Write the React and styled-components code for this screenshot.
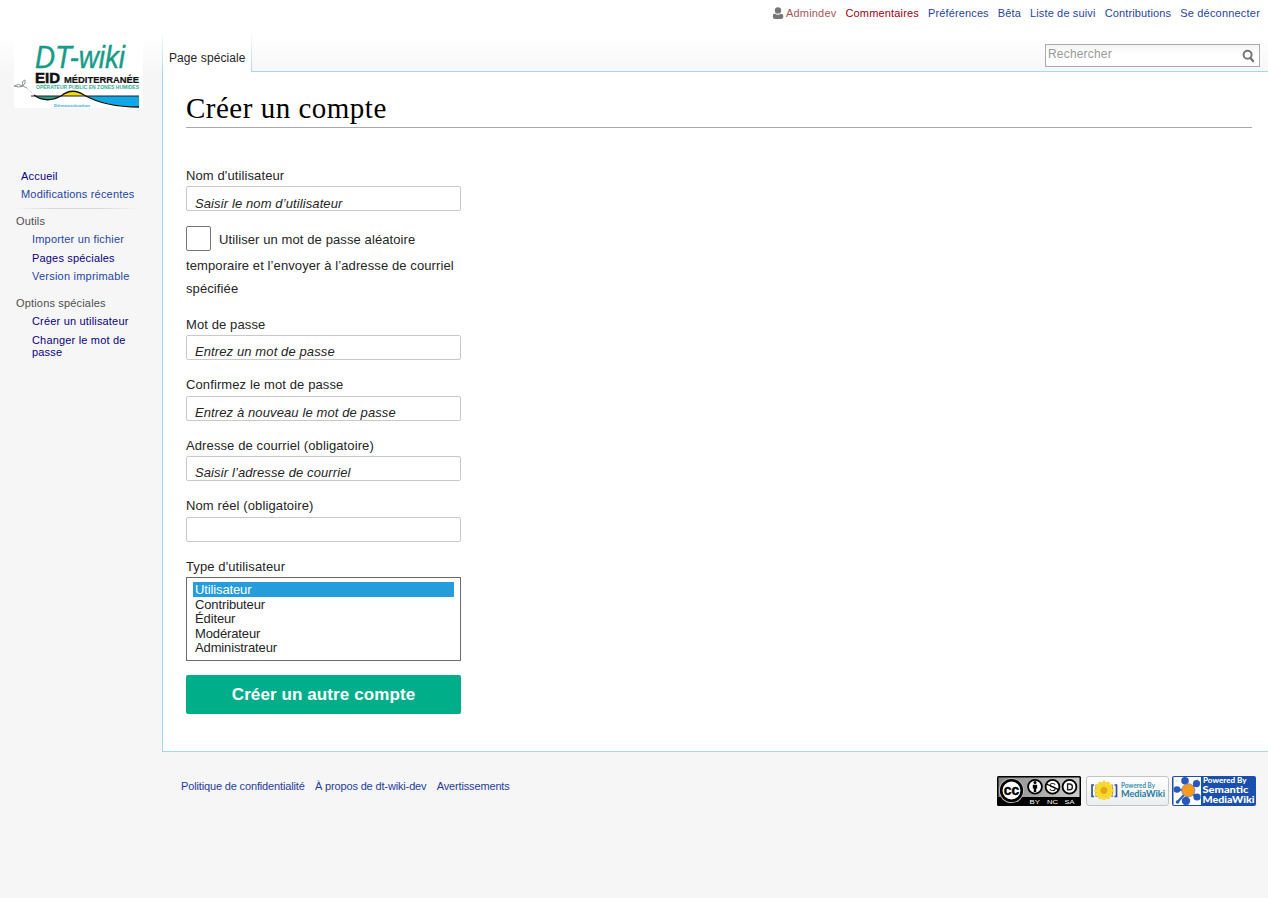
import React from 'react';
import styled, { createGlobalStyle } from 'styled-components';

const Global = createGlobalStyle`
  *, *::before, *::after { box-sizing: border-box; }
  body { margin: 0; background: #f6f6f6; font-family: "Liberation Sans", Arial, sans-serif; color: #252525; overflow: hidden; }
  a { text-decoration: none; color: inherit; }
  ul { list-style: none; margin: 0; padding: 0; }
`;

const Page = styled.div`
  display: grid;
  grid-template-columns: 162px 1fr;
  width: 1268px;
  height: 898px;
  background: linear-gradient(#fff 0, #fff 36px, #f6f6f6 76px);
`;

const Sidebar = styled.aside`
  padding: 38px 0 0 14px;
  font-size: 11px;
`;

const LogoBox = styled.div`
  width: 129px;
  height: 70px;
  margin-bottom: 59px;
  svg { display: block; }
`;

const MainLinks = styled.ul`
  padding-left: 7px;
  height: 41px;
`;

const NavLink = styled.li`
  line-height: ${(p) => (p.$tight ? '12px' : '18.4px')};
  padding-top: ${(p) => (p.$tight ? '3.5px' : 0)};
  letter-spacing: ${(p) => p.$ls ?? 0.18}px;
  color: ${(p) => (p.$visited ? '#0b0080' : '#1f45a0')};
  white-space: nowrap;
`;

const Divider = styled.div`
  height: 1px;
  width: 126px;
  margin-bottom: 3px;
  background: linear-gradient(to right, transparent, #d6d6d6 33%, #d6d6d6 66%, transparent);
`;

const Portal = styled.section`
  margin-bottom: 8.8px;
  h3 { margin: 0 0 0 2px; font-size: 11px; font-weight: 400; line-height: 18px; color: #4d4d4d; letter-spacing: 0.17px; }
  ul { padding: 0.2px 0 0 18px; }
`;

const Main = styled.div`
  display: flex;
  flex-direction: column;
  min-width: 0;
`;

const Header = styled.header`
  height: 71px;
`;

const Personal = styled.ul`
  display: flex;
  justify-content: flex-end;
  height: 32px;
  padding: 6px 8px 0 0;
  gap: 9px;
  font-size: 11px;
  line-height: 14px;
  color: #1f45a0;
`;

const PersonalItem = styled.li`
  display: flex;
  letter-spacing: ${(p) => p.$ls ?? 0.13}px;
  color: ${(p) => p.$color || 'inherit'};
  svg { margin: 1px 2px 0 0; }
`;

const HeaderRow = styled.div`
  display: flex;
  justify-content: space-between;
  height: 40px;
`;

const Tab = styled.div`
  width: 90px;
  height: 40px;
  padding: 18px 0 0 6px;
  font-size: 12px;
  line-height: 16px;
  letter-spacing: 0.09px;
  border: solid transparent;
  border-width: 0 1px;
  border-image: linear-gradient(#fff, #a7d7f0) 1;
  background: #fff;
  position: relative;
  z-index: 1;
`;

const Search = styled.div`
  display: flex;
  justify-content: space-between;
  width: 215px;
  height: 23px;
  margin: 12px 8px 0 0;
  padding: 2px 4px 0 2px;
  border: 1px solid #aaa;
  background: linear-gradient(#f4f4f4, #fff 45%);
  font-size: 12px;
  line-height: 15px;
  letter-spacing: 0.18px;
  color: #999;
  svg { margin-top: 2px; }
`;

const Content = styled.main`
  height: 681px;
  padding: 22px 16px 0 23px;
  background: #fff;
  border: 1px solid #a7d7f0;
  border-right: 0;
`;

const Title = styled.h1`
  margin: 0 0 38px;
  height: 34px;
  font-family: "Liberation Serif", serif;
  font-weight: 400;
  font-size: 29px;
  line-height: 29px;
  letter-spacing: 0.5px;
  color: #000;
  border-bottom: 1px solid #aaa;
`;

const Form = styled.form`
  width: 275px;
  font-size: 13px;
`;

const Field = styled.div`
  height: ${(p) => p.$h}px;
`;

const Label = styled.label`
  display: block;
  height: 20px;
  line-height: ${(p) => (p.$raised ? 18 : 20)}px;
  letter-spacing: 0.11px;
`;

const Input = styled.div`
  height: 25px;
  padding: ${(p) => (p.$low ? 9 : 8)}px 8px 0;
  line-height: 15px;
  border: 1px solid #c9c9c9;
  border-radius: 2px;
  font-style: italic;
  letter-spacing: 0.11px;
  white-space: nowrap;
`;

const CheckField = styled.div`
  height: 89px;
  line-height: 23px;
  letter-spacing: 0.1px;
  white-space: nowrap;
`;

const CheckRow = styled.div`
  display: flex;
  gap: 8px;
  height: 28px;
  line-height: 27px;
`;

const Checkbox = styled.span`
  width: 25px;
  height: 25px;
  border: 1px solid #777;
  border-radius: 2px;
`;

const Select = styled.ul`
  height: 84px;
  padding: 4px 6px;
  border: 1px solid #6b6b6b;
`;

const Option = styled.li`
  height: 14.6px;
  line-height: 15px;
  padding-left: 2px;
  letter-spacing: -0.13px;
  background: ${(p) => (p.$selected ? '#259dda' : 'transparent')};
  color: ${(p) => (p.$selected ? '#fff' : 'inherit')};
`;

const Submit = styled.button`
  display: block;
  width: 275px;
  height: 39px;
  margin: 14px 0 0;
  padding: 0;
  border: 0;
  border-radius: 2px;
  background: #00af89;
  color: #fff;
  font: bold 17px/39px "Liberation Sans", Arial, sans-serif;
  letter-spacing: 0.1px;
`;

const Footer = styled.footer`
  display: flex;
  justify-content: space-between;
  padding: 24px 12px 0 19px;
`;

const FooterLinks = styled.ul`
  display: flex;
  gap: 10.3px;
  padding-top: 3px;
  font-size: 11px;
  line-height: 14px;
  letter-spacing: -0.15px;
  color: #1f3d9a;
`;

const Badges = styled.div`
  display: flex;
  gap: 3px;
  svg { display: block; }
`;

const Logo = () => (
  <svg width="129" height="70" viewBox="0 0 129 70">
    <rect width="129" height="70" fill="#fff" />
    <text x="21" y="30" fontFamily="Liberation Sans, sans-serif" fontStyle="italic" fontSize="32" fill="#159b86" stroke="#159b86" strokeWidth=".4" textLength="90" lengthAdjust="spacingAndGlyphs">DT-wiki</text>
    <text x="21" y="44.5" fontFamily="Liberation Sans, sans-serif" fontSize="14" fontWeight="700" fill="#111" stroke="#111" strokeWidth=".5" textLength="25" lengthAdjust="spacingAndGlyphs">EID</text>
    <text x="50" y="44.5" fontFamily="Liberation Sans, sans-serif" fontSize="9.6" fontWeight="700" fill="#111" stroke="#111" strokeWidth=".2" textLength="75" lengthAdjust="spacingAndGlyphs">MÉDITERRANÉE</text>
    <text x="22" y="51" fontFamily="Liberation Sans, sans-serif" fontSize="4.8" fontWeight="700" fill="#35aa91" textLength="103" lengthAdjust="spacingAndGlyphs">OPÉRATEUR PUBLIC EN ZONES HUMIDES</text>
    <path d="M47 58 Q58 49 70 57 L72 58Z" fill="#f5dc10" />
    <path d="M22 58 H47 Q33 65 22 58Z" fill="#299c87" />
    <path d="M72 58 H125 V69 Q95 69 72 58Z" fill="#12a7e5" />
    <path d="M17 58 H125" stroke="#222" strokeWidth="1" />
    <path d="M20 57 Q32 66 47 58 Q58 49 70 57 Q91 69 125 69" fill="none" stroke="#111" strokeWidth="1.4" />
    <g fill="none" stroke="#8a9599" strokeWidth="1">
      <path d="M0 48 Q4 45 9 48 Q5 50 0 48 M9 48 Q7 43 11 42 Q12 45 9 48 L13 50" />
      <path d="M13 50 L20 57" strokeDasharray="1 1" opacity=".6" />
    </g>
    <text x="40" y="69" fontFamily="Liberation Sans, sans-serif" fontSize="4.3" fontWeight="700" fill="#35ade0" textLength="36" lengthAdjust="spacingAndGlyphs">Démoustication</text>
  </svg>
);

const UserIcon = () => (
  <svg width="12" height="13" viewBox="0 0 12 13">
    <path d="M1 8.2 C1 7 2 6.7 3 6.7 Q6 9 9 6.7 C11 6.7 11.3 8 11.3 9.3 Q11.3 12 9 12 H3 Q.8 12 .8 9.5Z" fill="#777" />
    <circle cx="6" cy="3.4" r="3.2" fill="#777" />
  </svg>
);

const SearchIcon = () => (
  <svg width="13" height="14" viewBox="0 0 13 14">
    <circle cx="5.6" cy="5.8" r="4" fill="none" stroke="#777" strokeWidth="2" />
    <path d="M8.5 9 L11 12" stroke="#777" strokeWidth="2.4" strokeLinecap="round" />
  </svg>
);

const CcBadge = () => (
  <svg width="85" height="30" viewBox="0 0 85 30" fontFamily="Liberation Sans, sans-serif" fontWeight="700">
    <defs><linearGradient id="cc"><stop stopColor="#888" /><stop offset="1" stopColor="#c9ccc8" /></linearGradient></defs>
    <rect width="84" height="30" rx="1.5" fill="#000" />
    <rect x="1.5" y="1.5" width="81" height="19.5" fill="url(#cc)" />
    <circle cx="14.5" cy="14.5" r="12.6" fill="#b8bab7" />
    <circle cx="14.5" cy="14.5" r="10.3" fill="#fff" stroke="#000" strokeWidth="2.6" />
    <text x="6.8" y="18.6" fontSize="14" fill="#000" stroke="#000" strokeWidth=".4" textLength="15.5" lengthAdjust="spacingAndGlyphs">cc</text>
    {[38, 55.5, 72.5].map((x) => (
      <circle key={x} cx={x} cy="10.8" r="6.9" fill="#fff" stroke="#000" strokeWidth="1.8" />
    ))}
    <circle cx="38" cy="6.5" r="1.5" />
    <path d="M35.8 8.8 H40.2 V12.5 H39.2 V16 H36.8 V12.5 H35.8Z" />
    <text x="52" y="14.6" fontSize="10.5" fontWeight="400">S</text>
    <path d="M49.5 8 L61.5 13.6" stroke="#000" strokeWidth="1.3" />
    <path d="M70.6 8 H72.8 Q75.4 8.2 75.4 10.9 Q75.4 13.6 72.8 13.8 H70.6Z" fill="none" stroke="#222" strokeWidth="1.4" />
    <g fill="#fff" fontSize="6.2" fontWeight="400">
      <text x="32.5" y="27.6" textLength="10.5" lengthAdjust="spacingAndGlyphs">BY</text>
      <text x="50" y="27.6" textLength="11" lengthAdjust="spacingAndGlyphs">NC</text>
      <text x="67.5" y="27.6" textLength="10" lengthAdjust="spacingAndGlyphs">SA</text>
    </g>
  </svg>
);

const petals = [0, 30, 60, 90, 120, 150, 180, 210, 240, 270, 300, 330];

const MwBadge = () => (
  <svg width="84" height="30" viewBox="0 0 84 30" fontFamily="Lato, sans-serif">
    <defs><linearGradient id="mw" x2="0" y2="1"><stop stopColor="#fff" /><stop offset="1" stopColor="#ebedf0" /></linearGradient></defs>
    <rect x="1.5" y=".5" width="82" height="29" rx="2.5" fill="url(#mw)" stroke="#c4c4c4" />
    <path d="M9 9 H7 V20.5 H9 M29.5 9 H31.5 V20.5 H29.5" fill="none" stroke="#37518e" strokeWidth="1.7" />
    <path d="M12.5 9 H11 V20.5 H12.5 M26 9 H27.5 V20.5 H26" fill="none" stroke="#8793b8" strokeWidth="1.2" />
    {petals.map((a) => (
      <ellipse key={a} cx="19" cy="8.9" rx="2" ry="4.2" fill="#f8dc2c" stroke="#eec212" strokeWidth=".3" transform={`rotate(${a} 19 14.5)`} />
    ))}
    <circle cx="19" cy="14.5" r="3.4" fill="#e6a51c" />
    <text x="36" y="11.8" fontSize="6.5" fontWeight="700" fill="#3b91ad" textLength="34" lengthAdjust="spacingAndGlyphs">Powered By</text>
    <text x="36" y="21" fontSize="10" fontWeight="700" fill="#277d9f" textLength="44" lengthAdjust="spacingAndGlyphs">MediaWiki</text>
  </svg>
);

const nodes = [[5, 13.5, 3.3], [13, 4.8, 3.8], [24.5, 7.6, 3.6], [25, 21, 3.6], [14, 25, 4.2], [5.5, 26, 1.8]];

const SmwBadge = () => (
  <svg width="84" height="30" viewBox="0 0 84 30" fontFamily="Lato, sans-serif" fontWeight="900" fill="#fff">
    <rect width="84" height="30" rx="2" fill="#1b4fae" />
    <rect x="1.5" y="1" width="27.5" height="28" fill="#fff" />
    {nodes.map(([x, y]) => (
      <path key={x + y} d={`M16 14.5 L${x} ${y}`} stroke="#315ebd" strokeWidth="2.2" />
    ))}
    {nodes.map(([x, y, r]) => (
      <circle key={x + y} cx={x} cy={y} r={r} fill="#2858b9" />
    ))}
    <circle cx="16.3" cy="14.3" r="6.6" fill="#f79a20" stroke="#7285b0" strokeWidth=".8" />
    <circle cx="25.5" cy="3" r=".8" fill="#eccf45" />
    <circle cx="5" cy="5" r=".7" fill="#eccf45" />
    <text x="31" y="6.7" fontSize="7" textLength="43.5" lengthAdjust="spacingAndGlyphs">Powered By</text>
    <text x="30.5" y="16.5" fontSize="10" textLength="46" lengthAdjust="spacingAndGlyphs">Semantic</text>
    <text x="30.5" y="27" fontSize="10" textLength="52" lengthAdjust="spacingAndGlyphs">MediaWiki</text>
  </svg>
);

const options = ['Utilisateur', 'Contributeur', 'Éditeur', 'Modérateur', 'Administrateur'];

const TextField = ({ label, hint, height, raised, low }) => (
  <Field $h={height}>
    <Label $raised={raised}>{label}</Label>
    <Input $low={low}>{hint}</Input>
  </Field>
);

export default function App() {
  return (
    <>
      <Global />
      <Page>
        <Sidebar>
          <LogoBox><Logo /></LogoBox>
          <MainLinks>
            <NavLink $visited><a href="#">Accueil</a></NavLink>
            <NavLink><a href="#">Modifications récentes</a></NavLink>
          </MainLinks>
          <Divider />
          <Portal>
            <h3>Outils</h3>
            <ul>
              <NavLink><a href="#">Importer un fichier</a></NavLink>
              <NavLink $visited><a href="#">Pages spéciales</a></NavLink>
              <NavLink $ls={0.22}><a href="#">Version imprimable</a></NavLink>
            </ul>
          </Portal>
          <Portal>
            <h3>Options spéciales</h3>
            <ul>
              <NavLink $visited><a href="#">Créer un utilisateur</a></NavLink>
              <NavLink $visited $tight><a href="#">Changer le mot de<br />passe</a></NavLink>
            </ul>
          </Portal>
        </Sidebar>
        <Main>
          <Header>
            <Personal>
              <PersonalItem $color="#a55858" $ls={0.2}><UserIcon />Admindev</PersonalItem>
              <PersonalItem $color="#a00010" $ls={0.17}>Commentaires</PersonalItem>
              <PersonalItem>Préférences</PersonalItem>
              <PersonalItem>Bêta</PersonalItem>
              <PersonalItem $ls={0.15}>Liste de suivi</PersonalItem>
              <PersonalItem>Contributions</PersonalItem>
              <PersonalItem $ls={0.2}>Se déconnecter</PersonalItem>
            </Personal>
            <HeaderRow>
              <Tab>Page spéciale</Tab>
              <Search>Rechercher<SearchIcon /></Search>
            </HeaderRow>
          </Header>
          <Content>
            <Title>Créer un compte</Title>
            <Form>
              <TextField label="Nom d'utilisateur" hint="Saisir le nom d’utilisateur" height={60} low />
              <CheckField>
                <CheckRow><Checkbox />Utiliser un mot de passe aléatoire</CheckRow>
                temporaire et l’envoyer à l’adresse de courriel<br />spécifiée
              </CheckField>
              <TextField label="Mot de passe" hint="Entrez un mot de passe" height={61} />
              <TextField label="Confirmez le mot de passe" hint="Entrez à nouveau le mot de passe" height={60} raised />
              <TextField label="Adresse de courriel (obligatoire)" hint="Saisir l’adresse de courriel" height={61} />
              <TextField label="Nom réel (obligatoire)" height={60} raised />
              <Label>Type d'utilisateur</Label>
              <Select>
                {options.map((o, i) => <Option key={o} $selected={i === 0}>{o}</Option>)}
              </Select>
              <Submit type="button">Créer un autre compte</Submit>
            </Form>
          </Content>
          <Footer>
            <FooterLinks>
              <li>Politique de confidentialité</li>
              <li>À propos de dt-wiki-dev</li>
              <li>Avertissements</li>
            </FooterLinks>
            <Badges><CcBadge /><MwBadge /><SmwBadge /></Badges>
          </Footer>
        </Main>
      </Page>
    </>
  );
}
